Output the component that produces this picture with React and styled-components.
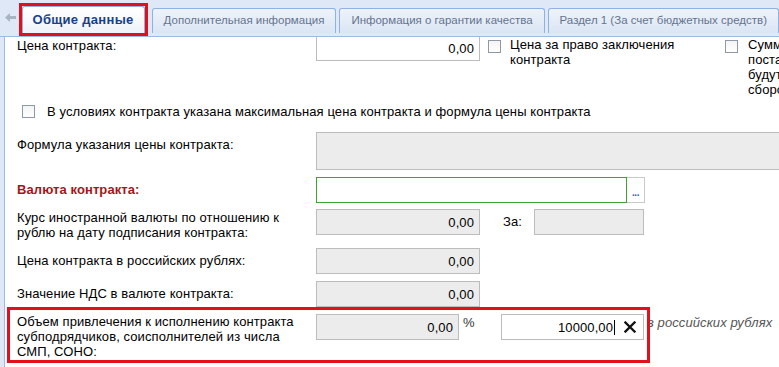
import React from "react";
import styled, { createGlobalStyle } from "styled-components";

const GlobalStyle = createGlobalStyle`
  * { box-sizing: border-box; }
  html, body { margin: 0; padding: 0; background: #fff; }
  body {
    font-family: "Liberation Sans", Arial, sans-serif;
    font-size: 13px;
    letter-spacing: 0.09px;
    color: #000;
  }
`;

const Screen = styled.div`
  width: 779px;
  height: 367px;
  overflow: hidden;
  display: flex;
  flex-direction: column;
  background: #dfe8f6;
`;

// tab strip
const TabStrip = styled.div`
  flex-shrink: 0;
  height: 37px;
  display: flex;
  align-items: flex-end;
  padding-bottom: 3px;
  border-bottom: 1px solid #99bbe8;
  white-space: nowrap;
`;

const Scroller = styled.div`
  width: 26px;
  height: 27px;
  display: flex;
  align-items: center;
  justify-content: center;
  padding-left: 4px;
  padding-bottom: 4px;
`;

const Highlight = styled.div`
  height: 33px;
  margin-left: 1px;
  margin-bottom: -3px;
  border: 3px solid #e2101b;
  display: flex;
`;

const Tab = styled.div`
  height: ${(p) => (p.$active ? "100%" : "25px")};
  margin-left: ${(p) => p.$ml || 0}px;
  padding: 0 ${(p) => (p.$active ? 10 : 11)}px;
  border: 1px solid #8db2e3;
  border-bottom: none;
  border-radius: 3px 3px 0 0;
  background: ${(p) =>
    p.$active
      ? "linear-gradient(#ffffff, #eef3fa)"
      : "linear-gradient(#eef3fa, #dae5f4)"};
  color: ${(p) => (p.$active ? "#15428b" : "#64748f")};
  font-size: ${(p) => (p.$active ? 13 : 11.5)}px;
  letter-spacing: ${(p) => (p.$active ? 0.3 : 0)}px;
  font-weight: ${(p) => (p.$active ? "bold" : "normal")};
  line-height: ${(p) => (p.$active ? 26 : 23)}px;
  flex-shrink: 0;
`;

// form panel
const Panel = styled.div`
  flex: 1;
  margin-left: 4px;
  background: #fff;
  border-left: 1px solid #99bbe8;
  overflow: hidden;
  display: flex;
  flex-direction: column;
`;

const Row = styled.div`
  display: flex;
  align-items: ${(p) => p.$align || "flex-start"};
  margin-top: ${(p) => p.$mt || 0}px;
  padding-left: ${(p) => (p.$pl == null ? 12 : p.$pl)}px;
  flex-shrink: 0;
`;

const Label = styled.div`
  width: 299px;
  flex-shrink: 0;
  line-height: 15px;
  padding-top: ${(p) => p.$pt || 0}px;
  color: ${(p) => (p.$required ? "#a3151b" : "#000")};
  font-weight: ${(p) => (p.$required ? "bold" : "normal")};
`;

const Field = styled.div`
  width: ${(p) => (p.$w ? `${p.$w}px` : "auto")};
  flex: ${(p) => (p.$grow ? "1" : "none")};
  height: ${(p) => p.$h || 26}px;
  margin-left: ${(p) => p.$ml || 0}px;
  margin-right: ${(p) => p.$mr || 0}px;
  border: 1px solid ${(p) => (p.$green ? "#3aa52f" : "#bcbcbc")};
  border-top: ${(p) => (p.$cut ? "none" : "")};
  background: ${(p) => (p.$white ? "#fff" : "#ececec")};
  display: flex;
  align-items: center;
  justify-content: flex-end;
  padding-right: ${(p) => p.$pr || 5}px;
  white-space: nowrap;
`;

const DotsButton = styled.div`
  width: 18px;
  height: 26px;
  border: 1px solid #c9c9c9;
  border-left: none;
  display: flex;
  align-items: center;
  justify-content: center;
  padding-top: 5px;
  color: #3d5fa0;
  font-size: 10px;
  font-weight: bold;
  letter-spacing: -0.5px;
`;

const CheckGroup = styled.div`
  width: ${(p) => p.$w}px;
  margin-left: ${(p) => p.$ml || 0}px;
  display: flex;
  align-items: flex-start;
  flex-shrink: 0;
`;

const Box = styled.span`
  width: 13px;
  height: 13px;
  flex-shrink: 0;
  margin-top: ${(p) => p.$mt || 0}px;
  border: 1px solid #8e98a6;
  background: linear-gradient(#f4f4f4, #ffffff);
`;

const CheckText = styled.div`
  margin-left: ${(p) => p.$ml || 9}px;
  line-height: 15px;
  white-space: nowrap;
`;

const SmallLabel = styled.div`
  width: ${(p) => p.$w}px;
  margin-left: ${(p) => p.$ml || 0}px;
  line-height: 15px;
  flex-shrink: 0;
  color: ${(p) => p.$color || "#000"};
  padding-top: ${(p) => p.$pt || 0}px;
`;

const RedBox = styled.div`
  position: relative;
  z-index: 1;
  width: 643px;
  height: 56px;
  margin-left: 2px;
  border: 3px solid #e2101b;
  padding: 4px 3px 0 7px;
  display: flex;
  align-items: flex-start;
  flex-shrink: 0;
`;

const Caret = styled.span`
  width: 1px;
  height: 15px;
  background: #000;
  margin-left: 1px;
`;

const ClearIcon = styled.svg`
  margin-left: 9px;
  flex-shrink: 0;
`;

const Hint = styled.div`
  margin-left: -3px;
  margin-top: 8px;
  font-style: italic;
  color: #555;
  line-height: 15px;
  white-space: nowrap;
`;

const App = () => {
  return (
    <>
      <GlobalStyle />
      <Screen>
        <TabStrip>
          <Scroller>
            <svg width="11" height="9" viewBox="0 0 11 9">
              <polygon points="0,4.5 5,0 5,9" fill="#a9b4c2" />
              <rect x="4" y="3" width="7" height="3" fill="#a9b4c2" />
            </svg>
          </Scroller>
          <Highlight>
            <Tab $active>Общие данные</Tab>
          </Highlight>
          <Tab $ml={4}>Дополнительная информация</Tab>
          <Tab $ml={3}>Информация о гарантии качества</Tab>
          <Tab $ml={3}>Раздел 1 (За счет бюджетных средств)</Tab>
        </TabStrip>

        <Panel>
          <Row>
            <Label $pt={1}>Цена контракта:</Label>
            <Field $w={164} $h={24} $white $cut>
              0,00
            </Field>
            <CheckGroup $w={237} $ml={8}>
              <Box $mt={3} />
              <CheckText>
                Цена за право заключения
                <br />
                контракта
              </CheckText>
            </CheckGroup>
            <CheckGroup $w={200}>
              <Box $mt={3} />
              <CheckText $ml={10}>
                Суммы, уплачиваемые
                <br />
                поставщику (подрядчику, исполнителю),
                <br />
                будут уменьшены на размер налогов,
                <br />
                сборов и иных обязательных платежей
              </CheckText>
            </CheckGroup>
          </Row>

          <Row $mt={7} $pl={17} $align="center">
            <Box />
            <CheckText $ml={12}>
              В условиях контракта указана максимальная цена контракта и
              формула цены контракта
            </CheckText>
          </Row>

          <Row $mt={13}>
            <Label $pt={5}>Формула указания цены контракта:</Label>
            <Field $grow $h={38} $mr={-20} />
          </Row>

          <Row $mt={7}>
            <Label $pt={5} $required>
              Валюта контракта:
            </Label>
            <Field $w={311} $white $green />
            <DotsButton>...</DotsButton>
          </Row>

          <Row $mt={6}>
            <Label $pt={1}>
              Курс иностранной валюты по отношению к
              <br />
              рублю на дату подписания контракта:
            </Label>
            <Field $w={164}>0,00</Field>
            <SmallLabel $w={31} $ml={23} $pt={5}>
              За:
            </SmallLabel>
            <Field $w={110} />
          </Row>

          <Row $mt={8}>
            <Label $pt={5}>Цена контракта в российских рублях:</Label>
            <Field $w={164}>0,00</Field>
          </Row>

          <Row $mt={7}>
            <Label $pt={5}>Значение НДС в валюте контракта:</Label>
            <Field $w={164}>0,00</Field>
          </Row>

          <Row $pl={0}>
            <RedBox>
              <Label>
                Объем привлечения к исполнению контракта
                <br />
                субподрядчиков, соисполнителей из числа
                <br />
                СМП, СОНО:
              </Label>
              <Field $w={143}>0,00</Field>
              <SmallLabel $w={38} $ml={4} $pt={1} $color="#333">
                %
              </SmallLabel>
              <Field $w={143} $white $pr={7}>
                10000,00
                <Caret />
                <ClearIcon width="12" height="12" viewBox="0 0 12 12">
                  <path
                    d="M1.5 1.5 L10.5 10.5 M10.5 1.5 L1.5 10.5"
                    stroke="#111"
                    strokeWidth="2.3"
                    strokeLinecap="square"
                  />
                </ClearIcon>
              </Field>
            </RedBox>
            <Hint>в российских рублях</Hint>
          </Row>
        </Panel>
      </Screen>
    </>
  );
};

export default App;
